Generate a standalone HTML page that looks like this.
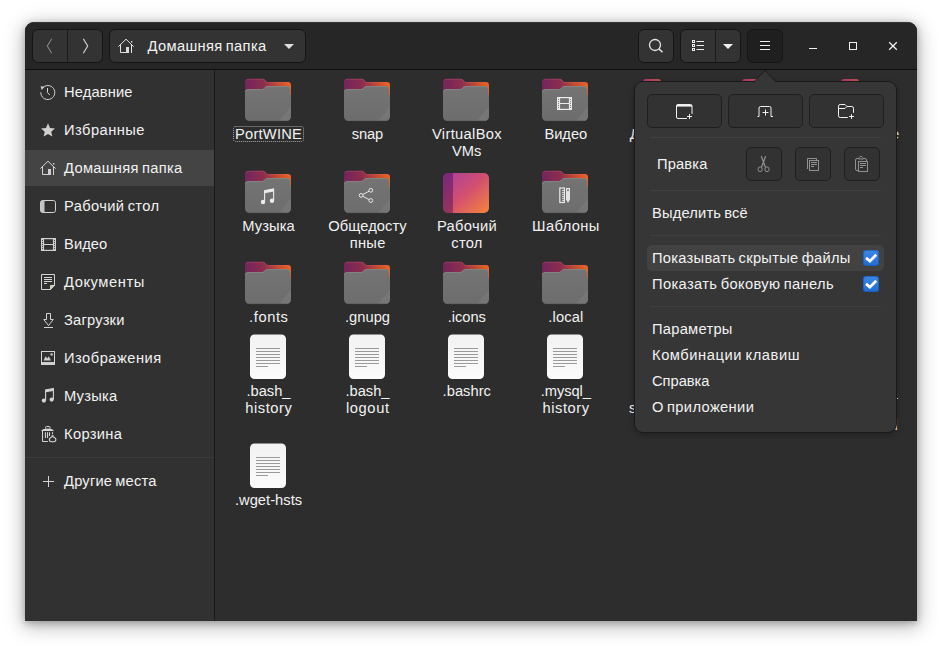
<!DOCTYPE html>
<html lang="ru">
<head>
<meta charset="utf-8">
<title>Домашняя папка</title>
<style>
html,body{margin:0;padding:0;}
body{width:942px;height:649px;background:#fff;overflow:hidden;position:relative;
  font-family:"Liberation Sans",sans-serif;font-size:14.7px;color:#f2f2f2;}
.abs,.t,.b,svg.i{position:absolute;}
.t{white-space:pre;line-height:18px;height:18px;color:#f2f2f2;}
.win{left:25px;top:22px;width:892px;height:599px;background:#2d2d2d;border-radius:9px 9px 0 0;
  box-shadow:0 2px 7px rgba(0,0,0,.26),0 4px 19px 2px rgba(0,0,0,.27);overflow:hidden;}
.hdr{left:0;top:0;width:892px;height:47px;background:#262626;border-bottom:1px solid #0e0e0e;
  box-shadow:inset 0 1px 0 rgba(255,255,255,.07);}
.side{left:0;top:48px;width:189px;height:551px;background:#313131;border-right:1px solid #1a1a1a;}
.sel{left:0;top:128px;width:189px;height:36px;background:#444;}
.sep{left:0;top:435px;width:189px;height:1px;background:#3b3b3b;}
.b{box-sizing:border-box;background:#333;border:1px solid #151515;border-radius:6px;}
.b.dark{background:#1f1f1f;border-color:#161616;}
.pop{left:635px;top:82px;width:261px;height:350px;background:#363636;border-radius:8px;
  box-shadow:0 0 0 1px #1a1a1a,0 2px 6px rgba(0,0,0,.35);}
.pb{box-sizing:border-box;background:#323232;border:1px solid #1f1f1f;border-radius:5px;position:absolute;}
.psep{position:absolute;height:1px;background:#3f3f3f;left:650px;width:231px;}
.hov{left:647px;top:245px;width:237px;height:26px;background:#424242;border-radius:5px;}
.chk{width:16px;height:16px;border-radius:3.500px;background:linear-gradient(#3b87e5,#216dcf);box-shadow:0 0 0 1px rgba(20,80,170,.55) inset;}
</style>
</head>
<body>
<svg width="0" height="0" style="position:absolute">
  <defs>
    <linearGradient id="fb" x1="0" y1="0" x2="1" y2="0">
      <stop offset="0" stop-color="#72255b"/><stop offset=".4" stop-color="#8c2e4e"/><stop offset=".7" stop-color="#bf4a31"/><stop offset="1" stop-color="#f0641e"/>
    </linearGradient>
    <linearGradient id="ff" x1="0" y1="0" x2="0" y2="1">
      <stop offset="0" stop-color="#747474"/><stop offset="1" stop-color="#6d6d6d"/>
    </linearGradient>
    <linearGradient id="dk" x1="0" y1="0" x2="1" y2="1">
      <stop offset="0" stop-color="#a93e9e"/><stop offset=".5" stop-color="#d2506f"/><stop offset="1" stop-color="#f8843c"/>
    </linearGradient>
    <linearGradient id="dc" x1="0" y1="0" x2="0" y2="1">
      <stop offset="0" stop-color="#f2f2f2"/><stop offset="1" stop-color="#fbfbfb"/>
    </linearGradient>
    <symbol id="folder" viewBox="0 0 48 48">
      <path d="M1 6.300a3.500 3.500 0 0 1 3.500-3.500h14.200c1 0 1.600.3 2.300 1l1.600 1.600c.5.500 1 .7 1.800.7H43.700a3.300 3.300 0 0 1 3.300 3.300V22H1z" fill="url(#fb)"/>
      <path d="M1.600 5a3.500 3.500 0 0 1 2.900-1.700h14.200c1 0 1.600.3 2.300 1l1.600 1.600c.5.500 1 .7 1.800.7H43.700a3.300 3.300 0 0 1 2.700 1.600" fill="none" stroke="#ff7a9a" stroke-width="1" opacity=".2"/>
      <path d="M1 16.400a3.300 3.300 0 0 1 3.300-3.300h13.500c.9 0 1.500-.2 2.200-.9l1.300-1.300c.6-.6 1.200-.8 2-.8H42.900a3.300 3.300 0 0 1 3.300 3.300V18l.8 1.200V40.500a4.500 4.500 0 0 1-4.500 4.500H5.500a4.500 4.500 0 0 1-4.500-4.500z" fill="url(#ff)"/>
      <path d="M1.200 15.800a3.300 3.300 0 0 1 3.100-2.200h13.500c.9 0 1.500-.2 2.200-.9l1.300-1.300c.6-.6 1.200-.8 2-.8H42.900a3.300 3.300 0 0 1 3.100 2.200" fill="none" stroke="#8c8c8c" stroke-width=".9" opacity=".8"/>
      <path d="M47 30.500V40.500a4.500 4.500 0 0 1-4.500 4.500H35z" fill="#808080" opacity=".45"/>
      <path d="M5 44.700h38" stroke="#5c5c5c" stroke-width=".8" opacity=".8"/>
    </symbol>
    <symbol id="doc" viewBox="0 0 48 48">
      <rect x="6" y="2.500" width="36" height="44.500" rx="4.500" fill="url(#dc)"/>
      <path d="M12 16.500h24M12 19.500h24M12 22.500h24M12 25.500h24M12 28.500h24M12 31.500h24M12 34.500h12" stroke="#9a9a9a" stroke-width="1"/>
    </symbol>
  </defs>
</svg>

<div class="abs win">
  <div class="abs hdr"></div>
  <div class="abs side">
    <div class="abs sel" style="top:80px"></div>
    <div class="abs sep" style="top:387px"></div>
  </div>
</div>

<!-- header buttons (page coords) -->
<div class="b" style="left:32px;top:29px;width:71px;height:34px;"></div>
<div class="abs" style="left:67px;top:30px;width:1px;height:32px;background:#1a1a1a"></div>
<div class="b" style="left:109px;top:29px;width:197px;height:34px;"></div>
<div class="b" style="left:638px;top:29px;width:36px;height:34px;"></div>
<div class="b" style="left:680px;top:29px;width:61px;height:34px;"></div>
<div class="abs" style="left:715px;top:30px;width:1px;height:32px;background:#1a1a1a"></div>
<div class="b dark" style="left:747px;top:29px;width:36px;height:34px;"></div>

<!-- header icons -->
<svg class="i" style="left:41px;top:36px" width="18" height="20" viewBox="0 0 18 20"><path d="M10.700 2.700L6.300 10L10.700 17.300" fill="none" stroke="#858585" stroke-width="1.100"/></svg>
<svg class="i" style="left:77px;top:36px" width="18" height="20" viewBox="0 0 18 20"><path d="M6.300 2.700L10.700 10L6.300 17.300" fill="none" stroke="#d6d6d6" stroke-width="1.100"/></svg>
<svg class="i" style="left:118px;top:38px" width="16" height="16" viewBox="0 0 16 16" fill="none" stroke="#e4e4e4" stroke-width="1">
  <path d="M.4 8.600L8 1.200L15.600 8.600"/><path d="M2.500 7v7.500h6"/><path d="M13.500 7v8"/><rect x="8" y="9" width="3" height="6" fill="#dcdcdc" stroke="none"/><rect x="13" y="3" width="1.300" height="1.500" fill="#dcdcdc" stroke="none"/>
</svg>
<svg class="i" style="left:283px;top:43px" width="12" height="7" viewBox="0 0 12 7"><path d="M1 1h10L6 6z" fill="#dedede"/></svg>
<svg class="i" style="left:647px;top:37px" width="18" height="18" viewBox="0 0 18 18" fill="none" stroke="#e6e6e6" stroke-width="1.300"><circle cx="8" cy="8" r="5.500"/><path d="M12 11.900L15.500 15.200" stroke-width="1.500"/></svg>
<svg class="i" style="left:690px;top:38px" width="16" height="16" viewBox="0 0 16 16" fill="none" stroke="#ececec" stroke-width="1">
  <rect x="2.500" y="2.500" width="2" height="2"/><rect x="2.500" y="6.500" width="2" height="2"/><rect x="2.500" y="10.500" width="2" height="2"/>
  <path d="M6.500 3.500h7.500M6.500 7.500h7.500M6.500 11.500h7.500"/>
</svg>
<svg class="i" style="left:722px;top:43px" width="12" height="7" viewBox="0 0 12 7"><path d="M1 1h10L6 6z" fill="#f0f0f0"/></svg>
<svg class="i" style="left:757px;top:38px" width="16" height="16" viewBox="0 0 16 16"><path d="M3 3.500h10M3 7.500h10M3 11.500h10" stroke="#f0f0f0" stroke-width="1"/></svg>
<svg class="i" style="left:805px;top:38px" width="16" height="16" viewBox="0 0 16 16"><path d="M4 10.500h8" stroke="#f0f0f0" stroke-width="1"/></svg>
<svg class="i" style="left:845px;top:38px" width="16" height="16" viewBox="0 0 16 16"><rect x="4.500" y="4.500" width="7" height="7" fill="none" stroke="#f0f0f0" stroke-width="1"/></svg>
<svg class="i" style="left:885px;top:38px" width="16" height="16" viewBox="0 0 16 16"><path d="M4.200 4.200l7.600 7.600M11.800 4.200l-7.600 7.600" stroke="#f4f4f4" stroke-width="1.250"/></svg>

<!-- sidebar icons -->
<svg class="i" style="left:40px;top:84px" width="16" height="16" viewBox="0 0 16 16" fill="none" stroke="#d4d4d4" stroke-width="1">
  <path d="M2.300 4.200A7 7 0 1 1 .8 8.300"/><path d="M.6 2.300L4.400 2.800L1.700 6.100z" fill="#d4d4d4" stroke="none"/><path d="M7.500 4v4.500l2.300 2.500"/>
</svg>
<svg class="i" style="left:40px;top:122px" width="16" height="16" viewBox="0 0 16 16"><path d="M8 1.300l2 4.700l5 .4l-3.800 3.300l1.200 4.900L8 11.900l-4.400 2.700l1.200-4.900L1 6.400l5-.4z" fill="#cfcfcf"/></svg>
<svg class="i" style="left:40px;top:160px" width="16" height="16" viewBox="0 0 16 16" fill="none" stroke="#d4d4d4" stroke-width="1">
  <path d="M.4 8.600L8 1.200L15.600 8.600"/><path d="M2.500 7v7.500h6"/><path d="M13.500 7v8"/><rect x="8" y="9" width="3" height="6" fill="#cfcfcf" stroke="none"/><rect x="13" y="3" width="1.300" height="1.500" fill="#cfcfcf" stroke="none"/>
</svg>
<svg class="i" style="left:40px;top:198px" width="16" height="16" viewBox="0 0 16 16"><rect x=".5" y="2.500" width="15" height="12" rx="2.200" fill="none" stroke="#d4d4d4"/><path d="M2.700 2.500H4.500v12H2.700A2.200 2.200 0 0 1 .5 12.300V4.700a2.200 2.200 0 0 1 2.200-2.200z" fill="#c4c4c4"/></svg>
<svg class="i" style="left:40px;top:236px" width="17" height="17" viewBox="0 0 17 17">
  <g fill="#d0d0d0"><rect x="1" y="2" width="3.100" height="13"/><rect x="12.900" y="2" width="3.100" height="13"/><rect x="4" y="2" width="9" height="1.200"/><rect x="4" y="13.800" width="9" height="1.200"/><rect x="4" y="8" width="9" height="1"/></g>
  <g fill="#3a3a3a"><rect x="2" y="3.9" width="1" height="1"/><rect x="2" y="5.9" width="1" height="1"/><rect x="2" y="7.9" width="1" height="1"/><rect x="2" y="9.9" width="1" height="1"/><rect x="2" y="11.9" width="1" height="1"/><rect x="14" y="3.9" width="1" height="1"/><rect x="14" y="5.9" width="1" height="1"/><rect x="14" y="7.9" width="1" height="1"/><rect x="14" y="9.9" width="1" height="1"/><rect x="14" y="11.9" width="1" height="1"/></g>
</svg>
<svg class="i" style="left:40px;top:274px" width="16" height="16" viewBox="0 0 16 16" fill="none" stroke="#d4d4d4" stroke-width="1">
  <path d="M1.500 .5h13v11l-4 4h-9z"/><path d="M14.500 11.500h-4v4z" fill="#c4c4c4"/><path d="M4 3.500h8M4 5.500h8M4 7.500h8M4 9.500h3"/>
</svg>
<svg class="i" style="left:40px;top:312px" width="16" height="16" viewBox="0 0 16 16" fill="none" stroke="#d4d4d4" stroke-width="1">
  <path d="M6.500 1.500h4v6h2.700L8.500 13.600L3.800 7.500h2.700z"/><path d="M4 15.500h9"/>
</svg>
<svg class="i" style="left:40px;top:350px" width="16" height="16" viewBox="0 0 16 16">
  <rect x="1.500" y="1.500" width="13" height="13" fill="none" stroke="#d4d4d4"/><rect x="1.500" y="12" width="13" height="2.500" fill="#cfcfcf"/>
  <path d="M3.500 10.500l2.200-4.300l1.600 2.300l1.400-2.200l2.300 4.200z" fill="#cfcfcf"/><circle cx="11.600" cy="4.400" r="1.200" fill="#cfcfcf"/>
</svg>
<svg class="i" style="left:40px;top:388px" width="16" height="16" viewBox="0 0 16 16">
  <path d="M5.600 12.200V1.900L13.400 .5V11.200" fill="none" stroke="#d4d4d4" stroke-width="1.100"/><path d="M5.600 1.900L13.400 .5V2.900L5.600 4.300z" fill="#d4d4d4"/>
  <circle cx="3.900" cy="12.600" r="2.100" fill="#d4d4d4"/><circle cx="11.700" cy="11.600" r="2.100" fill="#d4d4d4"/>
</svg>
<svg class="i" style="left:40px;top:425px" width="18" height="18" viewBox="0 0 18 18" fill="none" stroke="#d4d4d4" stroke-width="1">
  <rect x="5.500" y="1.500" width="4.600" height="2.600" rx="1"/><path d="M.8 6L3.400 3.900H11.900L14.100 6z" fill="#d4d4d4" stroke="none"/>
  <path d="M2.500 6V16.500H7.800"/><path d="M5.400 7.300v5.800M7.500 7.300v5.800M9.500 7.300v3.700M12.500 7.300v1.900" stroke-width="1.100"/>
  <path d="M11.200 10.300h2.800l-1.400 1.800z" fill="#d4d4d4" stroke="none"/><path d="M12.600 11.600C10.800 12.400 9.300 13.300 9.300 14.700C9.300 16.100 10.700 16.800 12.600 16.800C14.500 16.800 15.900 16.100 15.900 14.700C15.900 13.300 14.400 12.400 12.600 11.600z" stroke-width="1.050"/>
</svg>
<svg class="i" style="left:43px;top:476px" width="11" height="11" viewBox="0 0 11 11"><path d="M5.500 0v11M0 5.500h11" stroke="#d4d4d4" stroke-width="1"/></svg>

<!-- file grid icons -->
<svg class="i" style="left:244px;top:76px" width="48" height="48"><use href="#folder"/></svg>
<svg class="i" style="left:343px;top:76px" width="48" height="48"><use href="#folder"/></svg>
<svg class="i" style="left:442px;top:76px" width="48" height="48"><use href="#folder"/></svg>
<svg class="i" style="left:541px;top:76px" width="48" height="48"><use href="#folder"/></svg>
<div class="abs" style="left:643px;top:79px;width:18px;height:4px;border-radius:3px 3px 0 0;background:linear-gradient(90deg,#a9386d,#c7544c)"></div>
<div class="abs" style="left:742px;top:79px;width:18px;height:4px;border-radius:3px 3px 0 0;background:linear-gradient(90deg,#a9386d,#c7544c)"></div>
<div class="abs" style="left:841px;top:79px;width:18px;height:4px;border-radius:3px 3px 0 0;background:linear-gradient(90deg,#a9386d,#c7544c)"></div>

<svg class="i" style="left:244px;top:168px" width="48" height="48"><use href="#folder"/></svg>
<svg class="i" style="left:343px;top:168px" width="48" height="48"><use href="#folder"/></svg>
<svg class="i" style="left:442px;top:168px" width="48" height="48" viewBox="0 0 48 48">
  <rect x="1" y="5" width="46" height="40" rx="5" fill="url(#dk)"/>
  <path d="M1 10a5 5 0 0 1 5-5h5v40h-5a5 5 0 0 1-5-5z" fill="#3a0a50" opacity=".42"/>
</svg>
<svg class="i" style="left:541px;top:168px" width="48" height="48"><use href="#folder"/></svg>

<svg class="i" style="left:244px;top:259px" width="48" height="48"><use href="#folder"/></svg>
<svg class="i" style="left:343px;top:259px" width="48" height="48"><use href="#folder"/></svg>
<svg class="i" style="left:442px;top:259px" width="48" height="48"><use href="#folder"/></svg>
<svg class="i" style="left:541px;top:259px" width="48" height="48"><use href="#folder"/></svg>

<svg class="i" style="left:244px;top:332px" width="48" height="48"><use href="#doc"/></svg>
<svg class="i" style="left:343px;top:332px" width="48" height="48"><use href="#doc"/></svg>
<svg class="i" style="left:442px;top:332px" width="48" height="48"><use href="#doc"/></svg>
<svg class="i" style="left:541px;top:332px" width="48" height="48"><use href="#doc"/></svg>
<svg class="i" style="left:244px;top:441px" width="48" height="48"><use href="#doc"/></svg>

<!-- folder emblems -->
<svg class="i" style="left:556px;top:95px" width="17" height="17" viewBox="0 0 17 17">
  <g fill="#ececec"><rect x="1" y="2" width="3.100" height="13"/><rect x="12.900" y="2" width="3.100" height="13"/><rect x="4" y="2" width="9" height="1.200"/><rect x="4" y="13.800" width="9" height="1.200"/><rect x="4" y="8" width="9" height="1"/></g>
  <g fill="#7a7a7a"><rect x="2" y="3.9" width="1" height="1"/><rect x="2" y="5.9" width="1" height="1"/><rect x="2" y="7.9" width="1" height="1"/><rect x="2" y="9.9" width="1" height="1"/><rect x="2" y="11.9" width="1" height="1"/><rect x="14" y="3.9" width="1" height="1"/><rect x="14" y="5.9" width="1" height="1"/><rect x="14" y="7.9" width="1" height="1"/><rect x="14" y="9.9" width="1" height="1"/><rect x="14" y="11.9" width="1" height="1"/></g>
</svg>
<svg class="i" style="left:260px;top:188px" width="16" height="18" viewBox="0 0 16 18">
  <path d="M4.600 13.500V2.600L13.600 1V12.300" fill="none" stroke="#ececec" stroke-width="1.100"/><path d="M4.600 2.600L13.600 1V3.600L4.600 5.200z" fill="#ececec"/>
  <circle cx="3" cy="14" r="2.200" fill="#ececec"/><circle cx="12" cy="12.800" r="2.200" fill="#ececec"/>
</svg>
<svg class="i" style="left:358px;top:187px" width="18" height="18" viewBox="0 0 18 18" fill="none" stroke="#e8e8e8" stroke-width="1">
  <circle cx="12.800" cy="3.300" r="1.900"/><circle cx="3.100" cy="8.400" r="1.900"/><circle cx="12.800" cy="13.500" r="1.900"/><path d="M4.800 7.500l6.300-3.300M4.800 9.300l6.300 3.300"/>
</svg>
<svg class="i" style="left:559px;top:187px" width="12" height="17" viewBox="0 0 12 17">
  <rect x=".8" y="1" width="4.600" height="14.500" fill="none" stroke="#e8e8e8" stroke-width="1.200"/><path d="M3 3.500h2M3 5.500h2M3 7.500h2M3 9.500h2M3 11.500h2M3 13.500h2" stroke="#e8e8e8" stroke-width=".8"/>
  <path d="M7 1h4v11.500l-2 3.500l-2-3.500z" fill="#e4e4e4"/><rect x="8.200" y="2.300" width="1.600" height="1.800" fill="#6f6f6f"/>
</svg>


<!-- focus rectangle -->
<svg class="i" style="left:233px;top:126px" width="71" height="16" viewBox="0 0 71 16"><rect x=".5" y=".5" width="70" height="15" rx="2" fill="none" stroke="#a4a4a4" stroke-width="1" stroke-dasharray="1 1"/></svg>

<span class="t" style="left:147.5px;top:36.9px;letter-spacing:0.34px;word-spacing:-1.2px;">Домашняя папка</span>
<span class="t" style="left:64.0px;top:82.9px;letter-spacing:0.13px;">Недавние</span>
<span class="t" style="left:64.0px;top:120.9px;letter-spacing:0.46px;">Избранные</span>
<span class="t" style="left:64.0px;top:158.9px;letter-spacing:0.30px;word-spacing:-1.2px;">Домашняя папка</span>
<span class="t" style="left:64.0px;top:196.9px;letter-spacing:0.37px;word-spacing:-1.2px;">Рабочий стол</span>
<span class="t" style="left:64.0px;top:234.9px;letter-spacing:0.08px;">Видео</span>
<span class="t" style="left:64.0px;top:272.9px;letter-spacing:0.58px;">Документы</span>
<span class="t" style="left:64.0px;top:310.9px;letter-spacing:0.19px;">Загрузки</span>
<span class="t" style="left:64.0px;top:348.9px;letter-spacing:0.49px;">Изображения</span>
<span class="t" style="left:64.0px;top:386.9px;letter-spacing:0.22px;">Музыка</span>
<span class="t" style="left:64.0px;top:424.9px;letter-spacing:0.34px;">Корзина</span>
<span class="t" style="left:64.0px;top:471.9px;letter-spacing:0.20px;word-spacing:-1.2px;">Другие места</span>
<span class="t" style="left:235.1px;top:124.9px;letter-spacing:0.21px;">PortWINE</span>
<span class="t" style="left:351.7px;top:124.9px;letter-spacing:-0.11px;">snap</span>
<span class="t" style="left:432.0px;top:124.9px;letter-spacing:0.33px;">VirtualBox</span>
<span class="t" style="left:452.1px;top:141.9px;letter-spacing:-0.02px;">VMs</span>
<span class="t" style="left:544.4px;top:124.9px;letter-spacing:-0.02px;">Видео</span>
<span class="t" style="left:242.2px;top:216.9px;letter-spacing:0.12px;">Музыка</span>
<span class="t" style="left:328.3px;top:216.9px;letter-spacing:0.06px;">Общедосту</span>
<span class="t" style="left:349.7px;top:233.9px;letter-spacing:0.30px;">пные</span>
<span class="t" style="left:437.0px;top:216.9px;letter-spacing:0.31px;">Рабочий</span>
<span class="t" style="left:451.3px;top:233.9px;letter-spacing:0.24px;">стол</span>
<span class="t" style="left:532.1px;top:216.9px;letter-spacing:0.39px;">Шаблоны</span>
<span class="t" style="left:249.1px;top:307.9px;letter-spacing:0.58px;">.fonts</span>
<span class="t" style="left:345.0px;top:307.9px;letter-spacing:0.01px;">.gnupg</span>
<span class="t" style="left:447.8px;top:307.9px;letter-spacing:-0.06px;">.icons</span>
<span class="t" style="left:548.2px;top:307.9px;letter-spacing:0.18px;">.local</span>
<span class="t" style="left:246.6px;top:381.9px;letter-spacing:-0.05px;">.bash_</span>
<span class="t" style="left:245.3px;top:398.9px;letter-spacing:0.53px;">history</span>
<span class="t" style="left:345.6px;top:381.9px;letter-spacing:-0.05px;">.bash_</span>
<span class="t" style="left:346.0px;top:398.9px;letter-spacing:0.59px;">logout</span>
<span class="t" style="left:442.6px;top:381.9px;letter-spacing:0.03px;">.bashrc</span>
<span class="t" style="left:540.8px;top:381.9px;letter-spacing:-0.09px;">.mysql_</span>
<span class="t" style="left:542.6px;top:398.9px;letter-spacing:0.53px;">history</span>
<span class="t" style="left:234.9px;top:490.9px;letter-spacing:0.03px;">.wget-hsts</span>
<span class="t" style="left:629.8px;top:124.9px;letter-spacing:0.61px;">Документ</span>
<span class="t" style="left:733.6px;top:124.9px;letter-spacing:0.11px;">Загрузки</span>
<span class="t" style="left:825.9px;top:124.9px;letter-spacing:0.74px;">Изображе</span>
<span class="t" style="left:850.5px;top:141.9px;letter-spacing:-0.09px;">ния</span>
<span class="t" style="left:639.9px;top:381.9px;letter-spacing:0.74px;">.profile</span>
<span class="t" style="left:629.1px;top:398.9px;letter-spacing:0.24px;">successful</span>
<span class="t" style="left:734.6px;top:381.9px;letter-spacing:0.21px;">.python_</span>
<span class="t" style="left:827.4px;top:381.9px;letter-spacing:0.30px;">.sudo_as_</span>
<span class="t" style="left:838.5px;top:398.9px;letter-spacing:-0.03px;">admin_</span>
<span class="t" style="left:827.1px;top:415.9px;letter-spacing:0.24px;">successful</span>

<!-- popover -->

<div class="abs pop"></div>
<svg class="i" style="left:752px;top:69px" width="26" height="16" viewBox="0 0 26 16">
  <path d="M2.600 12.500L13 2.100L23.400 12.500V14.500H2.600z" fill="#363636"/><path d="M1.700 12.900L13 1.600L24.300 12.900" fill="none" stroke="#1a1a1a" stroke-width="1"/>
</svg>

<div class="pb" style="left:647px;top:94px;width:75px;height:34px;"></div>
<div class="pb" style="left:728px;top:94px;width:75px;height:34px;"></div>
<div class="pb" style="left:809px;top:94px;width:75px;height:34px;"></div>
<div class="psep" style="top:137px"></div>
<div class="pb" style="left:746px;top:147px;width:36px;height:34px;"></div>
<div class="pb" style="left:795px;top:147px;width:36px;height:34px;"></div>
<div class="pb" style="left:844px;top:147px;width:36px;height:34px;"></div>
<div class="psep" style="top:190px"></div>
<div class="psep" style="top:235px"></div>
<div class="abs hov"></div>
<div class="abs chk" style="left:863px;top:250px"></div>
<div class="abs chk" style="left:863px;top:276px"></div>
<svg class="i" style="left:863px;top:250px" width="16" height="16" viewBox="0 0 16 16"><path d="M3 7.900L6.900 11.100L13.200 4.700" fill="none" stroke="#fff" stroke-width="2.700"/></svg>
<svg class="i" style="left:863px;top:276px" width="16" height="16" viewBox="0 0 16 16"><path d="M3 7.900L6.900 11.100L13.200 4.700" fill="none" stroke="#fff" stroke-width="2.700"/></svg>
<div class="psep" style="top:306px"></div>

<span class="t" style="left:657.0px;top:154.9px;letter-spacing:0.16px;">Правка</span>
<span class="t" style="left:652.0px;top:203.9px;letter-spacing:0.18px;word-spacing:-1.2px;">Выделить всё</span>
<span class="t" style="left:652.0px;top:248.9px;letter-spacing:0.28px;word-spacing:-1.2px;">Показывать скрытые файлы</span>
<span class="t" style="left:652.0px;top:274.9px;letter-spacing:0.37px;word-spacing:-1.2px;">Показать боковую панель</span>
<span class="t" style="left:652.0px;top:319.9px;letter-spacing:0.26px;">Параметры</span>
<span class="t" style="left:652.0px;top:345.9px;letter-spacing:0.57px;word-spacing:-1.2px;">Комбинации клавиш</span>
<span class="t" style="left:652.0px;top:371.9px;letter-spacing:-0.03px;">Справка</span>
<span class="t" style="left:652.0px;top:397.9px;letter-spacing:0.36px;word-spacing:-1.2px;">О приложении</span>

<svg class="i" style="left:676px;top:104px" width="17" height="16" viewBox="0 0 17 16" fill="none" stroke="#f0f0f0" stroke-width="1">
  <path d="M11 14.500H2A1.500 1.500 0 0 1 .5 13V2A1.500 1.500 0 0 1 2 .5h12.500A1.500 1.500 0 0 1 16 2v8"/><path d="M.5 .8h15.500v1.800H.5z" fill="#f0f0f0" stroke="none"/><path d="M13.500 10v5M11 12.500h5"/>
</svg>
<svg class="i" style="left:757px;top:105px" width="17" height="13" viewBox="0 0 17 13" fill="none" stroke="#f0f0f0" stroke-width="1">
  <path d="M.5 11.500h1.500v-8.500a1.500 1.500 0 0 1 1.500-1.500h9a1.500 1.500 0 0 1 1.500 1.500v8.500h2"/><path d="M8.500 4.500v6M5.500 7.500h6"/>
</svg>
<svg class="i" style="left:837px;top:103px" width="18" height="17" viewBox="0 0 18 17" fill="none" stroke="#f0f0f0" stroke-width="1">
  <path d="M10.800 14.500H3.200A1.700 1.700 0 0 1 1.500 12.800V3.200A1.700 1.700 0 0 1 3.200 1.500H8L10 3.500h4.800A1.700 1.700 0 0 1 16.500 5.200V9.800"/><path d="M1.500 5.500H8L10 3.500"/><path d="M14.500 11.200v4.800M12 13.500h5"/>
</svg>
<svg class="i" style="left:756px;top:155px" width="16" height="18" viewBox="0 0 16 18" fill="none" stroke="#909090" stroke-width="1">
  <path d="M5.300 1.300L9.400 12.200M9.600 1.300L5.500 12.200" stroke-width="1.250"/><ellipse cx="4.100" cy="14.300" rx="2.100" ry="2.400"/><ellipse cx="11" cy="14.300" rx="2.100" ry="2.400"/>
</svg>
<svg class="i" style="left:806px;top:157px" width="14" height="15" viewBox="0 0 14 15" fill="none" stroke="#909090" stroke-width="1">
  <path d="M1.500 12V1.500H10.500V3.500"/><rect x="3.500" y="3.500" width="9" height="10"/><path d="M5 5.500h6M5 7.500h6M5 9.500h3"/>
</svg>
<svg class="i" style="left:854px;top:155px" width="15" height="18" viewBox="0 0 15 18" fill="none" stroke="#909090" stroke-width="1">
  <path d="M4.500 3.500H3A1.500 1.500 0 0 0 1.500 5V14A1.500 1.500 0 0 0 3 15.500H4.500M9.500 3.500H11A1.500 1.500 0 0 1 12.500 5V6.500"/><path d="M4.500 4L5.500 2.400a1.600 1.600 0 0 1 3 0L9.500 4z"/><rect x="4.500" y="6.500" width="9" height="10"/><path d="M6 8.500h6M6 10.500h6M6 12.500h3"/>
</svg>

</body>
</html>
